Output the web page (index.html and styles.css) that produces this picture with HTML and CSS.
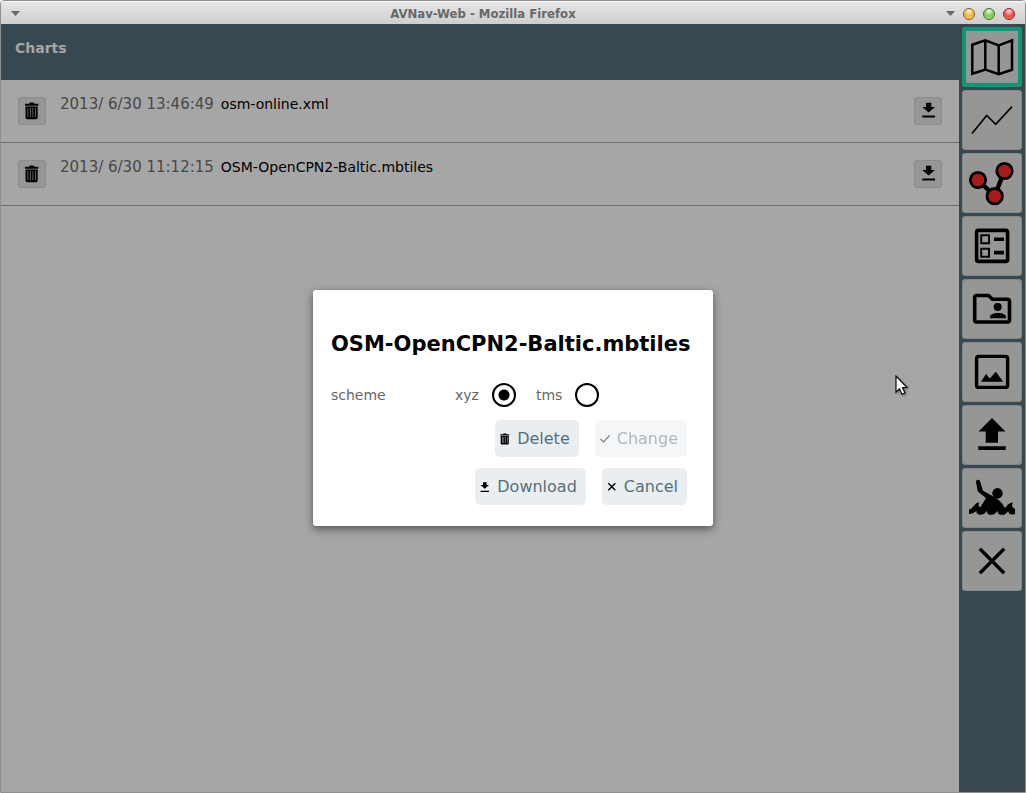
FILE: index.html
```html
<!DOCTYPE html>
<html lang="en">
<head>
<meta charset="utf-8">
<title>AVNav-Web</title>
<link rel="stylesheet" href="styles.css">
</head>
<body>
<svg class="defs" aria-hidden="true">
  <symbol id="trash" viewBox="0 0 28 28">
    <path d="M7 6.800h4l1-1.200h3.500l1 1.200h3.800v2H7z"/>
    <path fill-rule="evenodd" d="M7.500 9.400h12.200v11.100q0 1.800-1.800 1.800H9.300q-1.800 0-1.800-1.800zM9.600 11v9h.6v-9zM12 11v9h.6v-9zM14.600 11v9h.6v-9zM17.100 11v9h.6v-9z"/>
  </symbol>
  <symbol id="download" viewBox="0 0 28 28">
    <path d="M12 5.700h5.300V10H21l-6.400 5.600L8.200 10H12zM8.300 18.600H21v2H8.300z"/>
  </symbol>
</svg>
<div class="window">
  <header class="titlebar">
    <button class="tb-menu" aria-label="Window menu"></button>
    <span class="tb-title">AVNav-Web - Mozilla Firefox</span>
    <div class="tb-controls">
      <button class="tb-menu" aria-label="Shade"></button>
      <button class="orb orb-min" aria-label="Minimize"></button>
      <button class="orb orb-max" aria-label="Maximize"></button>
      <button class="orb orb-close" aria-label="Close window"></button>
    </div>
  </header>
  <div class="page">
    <main class="main">
      <h1 class="heading">Charts</h1>
      <ul class="list">
        <li class="row">
          <button class="small-btn" aria-label="Delete osm-online.xml"><svg><use href="#trash"/></svg></button>
          <span class="date">2013/ 6/30 13:46:49</span>
          <span class="name">osm-online.xml</span>
          <button class="small-btn" aria-label="Download osm-online.xml"><svg><use href="#download"/></svg></button>
        </li>
        <li class="row">
          <button class="small-btn" aria-label="Delete OSM-OpenCPN2-Baltic.mbtiles"><svg><use href="#trash"/></svg></button>
          <span class="date">2013/ 6/30 11:12:15</span>
          <span class="name">OSM-OpenCPN2-Baltic.mbtiles</span>
          <button class="small-btn" aria-label="Download OSM-OpenCPN2-Baltic.mbtiles"><svg><use href="#download"/></svg></button>
        </li>
      </ul>
    </main>
    <nav class="sidebar" aria-label="Tools">
      <button class="tool active" aria-label="Charts"><svg viewBox="0 0 60 60" fill="none" stroke="#000" stroke-width="2.500"><path d="M10.300 17.800l13-4.500 13.400 5.200 13.300-5.200v29.500l-13.300 4.500-13.400-4.700-13 4.200zM23.300 13.300v29.300M36.700 18.500v28.800"/></svg></button>
      <button class="tool" aria-label="Tracks"><svg viewBox="0 0 60 60" fill="none" stroke="#000" stroke-width="1.600"><path d="M10 43.500l14.700-18 9 8.800L50 16.600"/></svg></button>
      <button class="tool" aria-label="Routes"><svg viewBox="0 0 60 60" stroke="#000" stroke-width="2.800"><path d="M16 27l16.700 16 9.600-25" fill="none" stroke-width="4.500"/><g fill="#a91b1b"><circle cx="16" cy="27" r="7.700"/><circle cx="42.500" cy="18" r="7.700"/><circle cx="32.700" cy="43.200" r="7.700"/></g></svg></button>
      <button class="tool" aria-label="Layouts"><svg viewBox="0 0 60 60" fill="none" stroke="#000"><rect x="14.600" y="14.400" width="31" height="31" rx="2" stroke-width="3.600"/><path d="M19.200 19.200h7.800v8h-7.800zM19.200 32.800h7.800v8h-7.800z" stroke-width="2"/><path d="M32 23.200h10M32 36.600h10" stroke-width="3.600"/></svg></button>
      <button class="tool" aria-label="User files"><svg viewBox="0 0 60 60"><path d="M12.700 18.500q0-2 2-2h11.800l4 3.800H45.500q2 0 2 2V41q0 2-2 2H14.700q-2 0-2-2z" fill="none" stroke="#000" stroke-width="3.600"/><circle cx="35.700" cy="28" r="4"/><path d="M28 39.300v-1.300c0-5.300 16-5.300 16 0v1.300z"/></svg></button>
      <button class="tool" aria-label="Images"><svg viewBox="0 0 60 60"><rect x="14.600" y="14.400" width="31" height="31" rx="2" fill="none" stroke="#000" stroke-width="3.400"/><path d="M19 39.700l5-7.700 3.800 4.500 6-6.800 7.500 10z"/></svg></button>
      <button class="tool" aria-label="Upload"><svg viewBox="0 0 60 60"><path d="M30 13l13.500 13.400H36v11.400H23.700V26.400H16.500zM16.300 41.300h27.400v3.600H16.300z"/></svg></button>
      <button class="tool" aria-label="Man over board"><svg viewBox="0 0 60 60"><path d="M14 14.200c-.3-2.800 3.700-3.300 4.200-.6L20.800 22.500 29 27.300c4.500 2.200 8 4.700 10.500 7.500 1.500 2 2.500 3.500 3.500 5.400 2.500-3.700 4.500-5.200 8-5.600-1.800 2.800-.8 5 2 6.200v5.200c-1.800.8-4.500.9-6-.7-.6-.8-1-1.500-.8-2.400-1.700 2.500-3.500 3.900-6.200 3.900-3 0-4.500-1.500-4.200-4-2 2.900-4 4-6.600 4-3 0-4.500-1.500-4.200-4-2 2.900-3.800 4-6.300 4-3 0-4.600-1.500-4.200-4-2 2-4 3-7.500 3.200v-4.500c5-1 4.500-6.500 10.500-7.300-1.700 2.800-.8 4.500.8 5l5.700-9.200-8.200-6.500z"/><circle cx="35.500" cy="25.200" r="5.200"/></svg></button>
      <button class="tool" aria-label="Close"><svg viewBox="0 0 60 60" fill="none" stroke="#000" stroke-width="3.400"><path d="M17.800 17.800l24.400 24.400M42.200 17.800L17.800 42.200"/></svg></button>
    </nav>
    <div class="overlay">
      <dialog class="dialog" open aria-labelledby="dlg-title">
        <h2 class="dlg-title" id="dlg-title">OSM-OpenCPN2-Baltic.mbtiles</h2>
        <div class="scheme" role="radiogroup" aria-labelledby="scheme">
          <span class="scheme-name" id="scheme">scheme</span>
          <label class="choice">xyz<input class="radio" type="radio" name="scheme" checked></label>
          <label class="choice">tms<input class="radio" type="radio" name="scheme"></label>
        </div>
        <div class="actions">
          <button class="action"><svg viewBox="5 5 18 18"><use href="#trash" width="28" height="28"/></svg>Delete</button>
          <button class="action" disabled><svg viewBox="0 0 12 12" fill="none" stroke="#000" stroke-width="1.200"><path d="M1.500 6l3 3 6-6.500"/></svg>Change</button>
        </div>
        <div class="actions">
          <button class="action"><svg viewBox="6 4 18 18"><use href="#download" width="28" height="28"/></svg>Download</button>
          <button class="action"><svg viewBox="0 0 12 12" fill="none" stroke="#000" stroke-width="1.400"><path d="M2.300 2.300l7 7M9.300 2.300l-7 7"/></svg>Cancel</button>
        </div>
      </dialog>
    </div>
  </div>
  <svg class="cursor" viewBox="0 0 14 22" aria-hidden="true"><path d="M1 1v16l3.500-3.300 2.500 5.500 3-1.300-2.500-5.400H12z" fill="#fff" stroke="#111" stroke-width="1.200"/></svg>
</div>
</body>
</html>
```
FILE: styles.css
```css
* { box-sizing: border-box; }
body {
  margin: 0;
  font-family: "DejaVu Sans", sans-serif;
  font-size: 14px;
  color: #000;
}
button { font: inherit; padding: 0; border: 0; }
.defs { position: absolute; width: 0; height: 0; }
.window {
  display: flex;
  flex-direction: column;
  min-height: 100vh;
  border: 1px solid #8e8e8e;
  border-radius: 4px 4px 0 0;
  position: relative;
}
.titlebar {
  display: flex;
  align-items: center;
  height: 23px;
  padding: 1px 10px 0 10px;
  border-top: 1px solid #fafafa;
  border-radius: 3px 3px 0 0;
  background: linear-gradient(#e6e6e6, #cecece);
}
.tb-title {
  flex: 1;
  text-align: center;
  font: bold 13px/20px "DejaVu Sans Condensed", "DejaVu Sans", sans-serif;
  color: #686868;
}
.tb-controls { display: flex; align-items: center; gap: 8px; }
.tb-menu {
  width: 9px;
  height: 5px;
  background: #686868;
  clip-path: polygon(0 0, 100% 0, 50% 100%);
}
.orb { width: 12px; height: 12px; border-radius: 50%; border: 1px solid; }
.orb-min { border-color: #8d5a12; background: radial-gradient(circle at 50% 20%, #fff4dc, #f0b23c 55%, #ffe680); }
.orb-max { border-color: #3f7321; background: radial-gradient(circle at 50% 20%, #eefbe4, #7cc653 55%, #b9f48c); }
.orb-close { border-color: #931f1f; background: radial-gradient(circle at 50% 20%, #ffe4e4, #e84747 55%, #ff8a8a); }
.page { flex: 1; display: flex; position: relative; }
.main { flex: 1; background: #a6a6a6; }
.heading {
  margin: 0;
  height: 56px;
  padding: 14px;
  background: #384850;
  color: #a6a6a6;
  font-size: 14px;
  line-height: 20px;
}
.list { margin: 0; padding: 0; list-style: none; }
.row {
  display: flex;
  align-items: flex-start;
  height: 63px;
  padding: 14px 17px;
  border-bottom: 1px solid #6d6d6d;
  line-height: 20px;
}
.small-btn {
  width: 28px;
  height: 28px;
  margin-top: 3px;
  border-radius: 4px;
  background: #969696;
  box-shadow: inset 0 0 0 1px #8b8b8b;
}
.small-btn svg { display: block; width: 28px; height: 28px; }
.date { margin: 0 7px 0 14px; font-size: 15px; color: #484848; }
.name { flex: 1; }
.sidebar {
  display: flex;
  flex-direction: column;
  gap: 3px;
  padding: 3px;
  background: #384850;
}
.tool {
  width: 60px;
  height: 60px;
  border-radius: 4px;
  background: #969696;
  box-shadow: inset 0 0 0 1px #878787;
}
.tool svg { display: block; width: 60px; height: 60px; }
.active { box-shadow: inset 0 0 0 4px #109677; }
.overlay { position: absolute; inset: 0; display: grid; place-items: center; }
.dialog {
  position: static;
  min-width: 400px;
  margin: 0;
  padding: 39px 18px 21px;
  border: 0;
  border-radius: 3px;
  background: #fff;
  color: #000;
  box-shadow: 0 3px 8px rgba(0, 0, 0, 0.5);
}
.dlg-title { margin: 0 0 24px; font-size: 21px; line-height: 30px; }
.scheme { display: flex; gap: 20px; color: #666; line-height: 24px; margin-bottom: 13px; }
.scheme-name { width: 104px; }
.choice { display: flex; align-items: center; gap: 13px; }
.radio {
  appearance: none;
  width: 24px;
  height: 24px;
  margin: 0;
  border: 2px solid #000;
  border-radius: 50%;
}
.radio:checked { background: radial-gradient(circle, #000 5px, transparent 6px); }
.actions { display: flex; justify-content: flex-end; gap: 16px; padding-right: 8px; }
.actions + .actions { margin-top: 11px; }
.action {
  display: flex;
  align-items: center;
  gap: 6px;
  height: 37px;
  padding: 0 9px 0 4px;
  border-radius: 5px;
  background: #eaeef1;
  color: #54707e;
  font-size: 16px;
}
.action svg { width: 12px; height: 12px; }
.action:disabled { opacity: 0.5; }
.cursor {
  position: absolute;
  left: 894px;
  top: 374px;
  width: 14px;
  height: 22px;
  filter: drop-shadow(1px 1px 1px rgba(0, 0, 0, 0.4));
}
```
